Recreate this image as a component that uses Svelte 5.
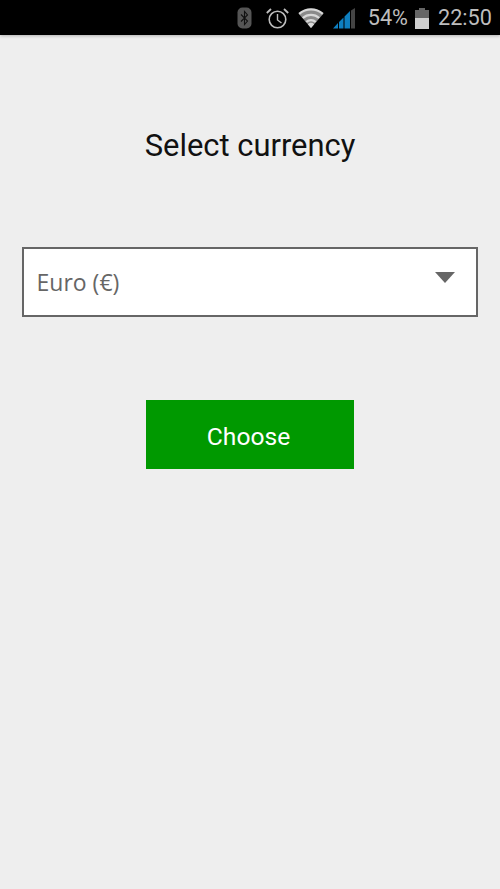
<script>
    let currency = "Euro (€)";
</script>

<div class="screen">
    <div class="statusbar">
        <svg class="bt" width="15" height="22" viewBox="0 0 15 22">
            <rect x="0.500" y="0.500" width="14" height="21" rx="5" fill="#555" />
            <path d="M4 7.500 L10.500 14 L7.500 17.500 V4.500 L10.500 8 L4 14.500" fill="none" stroke="#111" stroke-width="1.100" />
        </svg>
        <svg class="alarm" width="23" height="21" viewBox="0 0 23 21">
            <circle cx="11.500" cy="11.500" r="8.300" fill="none" stroke="#bdbdbd" stroke-width="1.600" />
            <path d="M11.500 6 V12 L15.500 15" fill="none" stroke="#bdbdbd" stroke-width="1.400" />
            <path d="M0.800 5 L5 1 M22.200 5 L18 1" stroke="#bdbdbd" stroke-width="1.800" />
        </svg>
        <svg class="wifi" width="26" height="20" viewBox="0 0 26 20">
            <path d="M13 20 L0.500 5.500 A19 19 0 0 1 25.500 5.500 Z" fill="#8a8a8a" />
            <path d="M1.200 5.800 A18 18 0 0 1 24.800 5.800 M4.800 10 A12.500 12.500 0 0 1 21.200 10 M8.300 14 A7 7 0 0 1 17.700 14" fill="none" stroke="#d8d8d8" stroke-width="2.300" />
            <path d="M13 20 L9.800 16.200 A5 5 0 0 1 16.200 16.200 Z" fill="#d8d8d8" />
        </svg>
        <svg class="signal" width="22" height="21" viewBox="0 0 22 21">
            <path d="M0 20.500 L5 20.500 V15 Z M6 20.500 H10.500 V9.500 L6 14 Z M11.500 20.500 H17 V3 L11.500 8.500 Z" fill="#0e7fc0" />
            <path d="M18 20.500 H22 V0 L18 2.500 Z" fill="#444" />
        </svg>
        <span class="pct">54%</span>
        <svg class="battery" width="14" height="21" viewBox="0 0 14 21">
            <rect x="4" y="0" width="6" height="2" fill="#666" />
            <rect x="0" y="2" width="14" height="8" fill="#666" />
            <rect x="0" y="10" width="14" height="11" fill="#cfcfcf" />
        </svg>
        <span class="time">22:50</span>
    </div>

    <main>
        <h1>Select currency</h1>
        <div class="select">
            <span>{currency}</span>
            <i class="arrow"></i>
        </div>
        <button>Choose</button>
    </main>
</div>

<style>
    :global(body) {
        margin: 0;
        background: #eeeeee;
    }
    .screen {
        width: 500px;
        height: 889px;
        overflow: hidden;
        display: flex;
        flex-direction: column;
        font-family: Roboto, "Liberation Sans", sans-serif;
    }
    .statusbar {
        height: 35px;
        box-sizing: border-box;
        background: #000;
        display: flex;
        align-items: center;
        justify-content: flex-end;
        padding-right: 8px;
        color: #bdbdbd;
        font-size: 21.7px;
        box-shadow: 0 1px 3px rgba(0, 0, 0, 0.25);
    }
    .statusbar svg { margin-top: 1px; }
    .bt { margin-right: 14px; }
    .alarm { margin-right: 9px; }
    .wifi { margin-right: 9px; }
    .signal { margin-right: 13px; }
    .pct { margin-right: 7px; }
    .battery { margin-right: 9px; }
    main {
        flex: 1;
        display: flex;
        flex-direction: column;
        align-items: flex-start;
        padding: 0 22px;
    }
    h1 {
        margin: 92px 0 0;
        align-self: center;
        height: 38px;
        line-height: 38px;
        font-size: 30.9px;
        font-weight: 400;
        color: #111;
    }
    .select {
        margin-top: 82px;
        width: 455.5px;
        height: 70px;
        box-sizing: border-box;
        border: 2px solid #666;
        background: #fff;
        padding-left: 12.500px;
        display: flex;
        align-items: center;
        justify-content: space-between;
        position: relative;
        color: #666;
        font-family: "Open Sans", sans-serif;
        font-size: 23px;
    }
    .arrow {
        position: absolute;
        right: 21px;
        top: 23px;
        border-left: 10px solid transparent;
        border-right: 10px solid transparent;
        border-top: 11px solid #666;
    }
    button {
        margin: 83px 0 0 123.5px;
        width: 208px;
        height: 69px;
        border: 0;
        border-radius: 0;
        background: #009900;
        color: #fff;
        font-family: inherit;
        font-size: 24.6px;
        padding: 3px 2px 0 0;
    }
</style>
